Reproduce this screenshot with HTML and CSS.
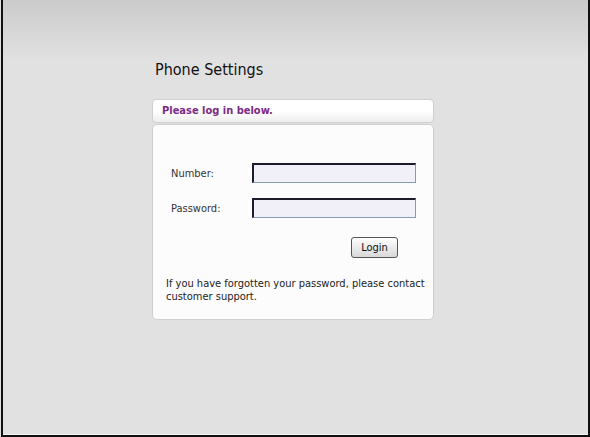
FILE: index.html
```html
<!DOCTYPE html>
<html lang="en">
<head>
  <meta charset="UTF-8" />
  <title>Phone Settings</title>
  <link rel="stylesheet" href="styles.css">
</head>
<body>
  <div class="frame">
    <div class="wrap">
      <h1 class="title">Phone Settings</h1>
      <div class="notice">Please log in below.</div>
      <div class="panel">
        <form class="login">
          <div class="row">
            <label for="number">Number:</label>
            <input type="text" id="number" class="field">
          </div>
          <div class="row">
            <label for="password">Password:</label>
            <input type="password" id="password" class="field">
          </div>
          <div class="actions">
            <button type="button" class="btn">Login</button>
          </div>
        </form>
        <p class="help">If you have forgotten your password, please contact customer support.</p>
      </div>
    </div>
  </div>
</body>
</html>
```

FILE: styles.css
```css
* {
  margin: 0;
  padding: 0;
  box-sizing: border-box;
}
html, body {
  height: 100%;
}
body {
  font-family: 'DejaVu Sans Condensed', 'DejaVu Sans', sans-serif;
  font-size: 11px;
  color: #222;
  background: #e0e0e0;
}
.frame {
  height: 437px;
  width: 589px;
  margin-left: 1px;
  border-left: 2px solid #111;
  border-right: 2px solid #111;
  border-bottom: 2px solid #111;
  background: linear-gradient(#cbcbcb, #e1e1e1 60px, #e1e1e1);
  box-shadow: inset 0 -1px 0 #f4f4f4;
}
.wrap {
  width: 282px;
  margin-left: 149px;
  padding-top: 60px;
}
.title {
  font-weight: normal;
  font-size: 16px;
  color: #111;
  padding-left: 3px;
  line-height: 20px;
  margin-bottom: 19px;
}
.notice {
  height: 24px;
  border: 1px solid #cfcfcf;
  border-radius: 4px;
  background: linear-gradient(#ffffff, #ffffff 50%, #eeeeee);
  color: #7b2a87;
  font-weight: bold;
  font-size: 11px;
  line-height: 22px;
  padding-left: 9px;
  margin-bottom: 1px;
}
.panel {
  height: 196px;
  border: 1px solid #cfcfcf;
  border-radius: 5px;
  background: #fcfcfc;
  padding: 38px 4px 0 13px;
}
.login {
  padding-left: 5px;
  padding-right: 13px;
}
.row {
  display: flex;
  align-items: center;
  height: 20px;
  margin-bottom: 15px;
}
.row label {
  width: 81px;
  color: #333;
}
.field {
  width: 164px;
  height: 20px;
  background: #f1eff7;
  border: 1px solid #7f9db9;
  border-top-color: #1c1c2c;
  border-left-color: #1c1c2c;
  border-width: 2px 1px 1px 2px;
}
.actions {
  display: flex;
  justify-content: flex-end;
  padding-right: 18px;
  margin-top: 19px;
}
.btn {
  width: 47px;
  height: 21px;
  font-family: inherit;
  font-size: 11px;
  color: #111;
  border: 1px solid #555;
  border-radius: 3px;
  background: linear-gradient(#ffffff, #ebebeb 50%, #d8d8d8);
}
.help {
  margin-top: 19px;
  line-height: 13px;
  color: #222;
}
```
